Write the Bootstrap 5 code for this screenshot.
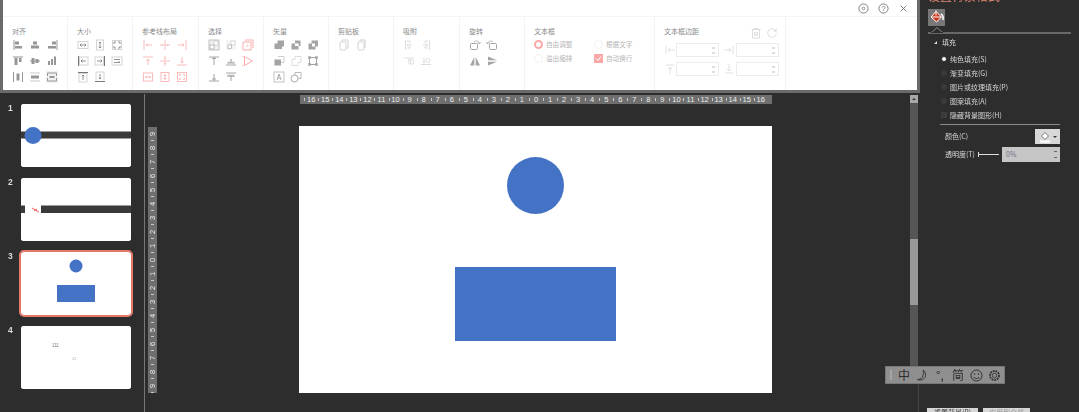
<!DOCTYPE html>
<html lang="zh-CN">
<head>
<meta charset="utf-8">
<title>PPT</title>
<link href="https://cdn.jsdelivr.net/npm/bootstrap@5.3.0/dist/css/bootstrap.min.css" rel="stylesheet">
<style>
html,body{margin:0;height:412px;overflow:hidden;background:#2d2d2d;}
body{font-family:"Noto Sans CJK SC","Liberation Sans",sans-serif;font-size:7px;line-height:1;}
.shell{width:1079px;height:412px;position:relative;filter:blur(.3px);}
.left-col{width:920px;flex:none;}
.ribbon{height:93px;background:#fff;border:solid #6a6a6a;border-width:0 3px 3px 3px;}
.ribbon-top{height:17px;border-bottom:1px solid #f4f4f4;padding-right:8px;gap:9px;color:#777;}
.ribbon-top svg{width:11px;height:11px;}
.rgroup{height:73px;border-right:1px solid #f3f3f3;flex:none;padding:10px 0 0 9px;}
.rtitle{color:#8a8a8a;font-size:7px;height:10px;line-height:8px;white-space:nowrap;}
.igrid{display:grid;grid-template-columns:repeat(3,17.4px);grid-auto-rows:16px;margin-top:0;margin-left:-.5px;}
.igrid svg{width:12px;height:12px;margin:2px 0 0 0;}
.tone-g{color:#a4a4a4;}
.tone-p{color:#f9abab;}
.tone-d{color:#969696;}
.tone-l{color:#d4d4d4;}
.opt-grid{display:grid;grid-template-columns:60px 50px;grid-auto-rows:14px;margin-top:0;color:#b5b5b5;font-size:6.6px;}
.opt{display:flex;align-items:center;gap:3px;white-space:nowrap;}
.dot{width:9px;height:9px;border-radius:50%;border:1px solid #f1f1f1;flex:none;}
.dot-on{border:2.5px solid #f9a7a7;background:#fff;}
.tick{width:9px;height:9px;background:#f9a7a7;flex:none;display:flex;}
.tick svg{width:9px;height:9px;}
.field-row{display:flex;align-items:center;height:19px;gap:0;}
.field-icon{width:12px;height:12px;color:#d8d8d8;flex:none;margin-right:0;}
.field{width:43px;height:14px;border:1px solid #ececec;flex:none;position:relative;margin:0 4px 0 0;}
.field::after{content:"";position:absolute;right:3px;top:3px;width:3px;height:7px;border-top:2px solid #ddd;border-bottom:2px solid #ddd;}
.work{height:319px;}
.thumbs{width:144px;flex:none;padding:11px 0 0 8px;border-right:0;}
.thumb-row{display:flex;height:74px;gap:8px;}
.tnum{color:#dcdcdc;font-family:"Liberation Sans",sans-serif;font-weight:700;font-size:8.5px;width:5px;margin-top:-1px;line-height:10px;}
.tcard{width:110px;height:63px;background:#fff;border-radius:3px;overflow:hidden;display:block;flex:none;}
.tsel{outline:2px solid #e4796a;outline-offset:0;border-radius:3px;}
.vline{width:1px;background:#777;flex:none;margin-top:1px;}
.canvas{flex:1 1 auto;min-width:0;}
.ruler-h{height:9px;margin:2px 0 0 155px;width:472px;background:#6f6f6f;color:#eee;display:flex;justify-content:center;font-family:"Liberation Sans",sans-serif;}
.rcell{width:14.06px;flex:none;text-align:center;font-size:7.5px;line-height:9px;background:linear-gradient(#c8c8c8,#c8c8c8) 0 3px/1px 3px no-repeat;}
.stage{margin-top:22px;}
.ruler-v{width:9px;height:266px;background:#6f6f6f;color:#eee;margin:1px 0 0 3px;display:flex;flex-direction:column;flex:none;font-family:"Liberation Sans",sans-serif;}
.vcell{height:14px;font-size:7.5px;line-height:9px;text-align:center;writing-mode:vertical-rl;transform:rotate(180deg);flex:none;background:linear-gradient(#c8c8c8,#c8c8c8) 3px 0/3px 1px no-repeat;}
.slide{width:473px;height:267px;background:#fff;margin-left:142px;position:relative;flex:none;}
.s-circle{position:absolute;left:208px;top:31px;width:57px;height:57px;border-radius:50%;background:#4472c4;}
.s-rect{position:absolute;left:156px;top:141px;width:161px;height:74px;background:#4472c4;}
.vscroll{width:8px;margin:2px 2px 0 0;flex:none;}
.vbtn{height:8px;background:#a8a8a8;position:relative;}
.vbtn::after{content:"";position:absolute;left:2px;top:3px;border:2px solid transparent;border-top:0;border-bottom:2px solid #333;}
.vtrack{height:263px;background:#555;padding-top:136px;}
.vthumb{height:66px;background:#999;}
.vrest{width:1px;background:#454545;height:46px;margin-left:8px;}
.pane{width:159px;flex:none;color:#ddd;}
.pane-title{color:#e98a76;font-size:12px;line-height:12px;margin:-10px 0 0 8px;height:12px;white-space:nowrap;}
.fill-btn{width:17px;height:17px;background:#777;margin:7px 0 0 8px;}
.fill-btn svg{width:17px;height:17px;display:block;}
.pane-line{height:2px;background:#686868;margin:6px 8px 0 8px;position:relative;}
.pane-line svg{position:absolute;left:3px;top:-5px;width:12px;height:6px;}
.sec{display:flex;align-items:center;height:10px;margin:3px 0 0 14px;gap:5px;}
.tri{width:0;height:0;border-left:3px solid transparent;border-bottom:3px solid #ddd;}
.fill-list{margin:5px 0 0 21px;}
.fill-row{display:flex;align-items:center;height:14px;gap:3px;white-space:nowrap;color:#d6d6d6;}
.rdo{width:6px;height:6px;border-radius:50%;background:#3a3a3a;flex:none;}
.rdo-on{background:#fff;box-sizing:border-box;border:1px solid #2d2d2d;}
.chk{width:6px;height:6px;background:#3c3c3c;flex:none;}
.pane-sep{height:1px;background:#8a8a8a;margin:2px 19px 0 20px;}
.prop{display:flex;align-items:center;justify-content:space-between;margin:0 19px 0 25px;white-space:nowrap;color:#d6d6d6;}
.colbtn{width:25px;height:15px;background:#d8d8d8;display:flex;align-items:center;justify-content:center;gap:2px;}
.colbtn svg{width:12px;height:12px;}
.colbtn i{border:2px solid transparent;border-top:2.5px solid #333;border-bottom:0;}
.slider{width:21px;height:5px;border-left:1px solid #ddd;position:relative;}
.slider::after{content:"";position:absolute;left:0;right:0;top:2px;height:1px;background:#ddd;}
.pct{width:58px;height:15px;background:#c6c6c6;color:#77708a;padding-left:4px;line-height:15px;position:relative;}
.pct::after{content:"";position:absolute;right:3px;top:4px;width:3px;height:7px;border-top:1px solid #666;border-bottom:1px solid #666;}
.ime{position:absolute;left:885px;top:366px;width:120px;height:18px;background:#8f8f8f;border:1px solid #777;display:flex;align-items:center;color:#2e2e2e;padding-left:4px;gap:0;}
.ime-grip{width:2px;height:10px;background:#a5a5a5;margin-right:3px;flex:none;}
.ime-t{font-size:12px;width:18px;text-align:center;flex:none;}
.ime-ic{width:18px;flex:none;display:flex;justify-content:center;}
.ime svg{width:13px;height:13px;display:block;}
.foot-btn{position:absolute;top:408px;height:6px;background:#d6d6d6;color:#444;font-size:7px;line-height:8px;text-align:center;overflow:hidden;}
.fb1{left:927px;width:51px;}
.fb2{left:983px;width:47px;color:#999;}
</style>
</head>
<body>
<svg width="0" height="0" class="d-none">
<defs>
<g id="h-arrow"><path d="M3 6h6M3 6l1.500-1.500M3 6l1.500 1.500M9 6L7.500 4.500M9 6L7.500 7.500"/></g>
<symbol id="al1" viewBox="0 0 12 12"><path d="M2 1v10" fill="none" stroke="currentColor"/><path d="M3 2.500h4v3H3zM3 7h7v2.500H3z" fill="currentColor"/></symbol>
<symbol id="al2" viewBox="0 0 12 12"><path d="M4 2.500h4v3H4zM2 6.500h8v3H2z" fill="currentColor"/></symbol>
<symbol id="al3" viewBox="0 0 12 12"><path d="M11 1v10" fill="none" stroke="currentColor"/><path d="M6 2.500h4v3H6zM2 7h8v2.500H2z" fill="currentColor"/></symbol>
<symbol id="al4" viewBox="0 0 12 12"><path d="M1 2h10" fill="none" stroke="currentColor"/><path d="M2.500 3h3v7h-3zM7 3h2.500v4H7z" fill="currentColor"/></symbol>
<symbol id="al5" viewBox="0 0 12 12"><path d="M2.500 3h3v6h-3zM6.500 4h3v4h-3z" fill="currentColor"/><path d="M1 6h10" stroke="currentColor"/></symbol>
<symbol id="al6" viewBox="0 0 12 12"><path d="M2 6h2v4H2zM5 4h2v6H5zM8 1.500h2V10H8z" fill="currentColor"/></symbol>
<symbol id="al7" viewBox="0 0 12 12"><path d="M1.500 1v10M10.500 1v10" fill="none" stroke="currentColor"/><path d="M4.500 2.500h3v7h-3z" fill="currentColor"/></symbol>
<symbol id="al8" viewBox="0 0 12 12"><path d="M1 2h10M1 10h10" fill="none" stroke="currentColor" opacity=".5"/><path d="M2 4.500h8v3H2z" fill="currentColor"/></symbol>
<symbol id="al9" viewBox="0 0 12 12"><rect width="12" height="12" fill="#f1f1f1"/><path d="M1.500 2h9v3M1.500 2v3M1.500 10h9V7M1.500 10V7" fill="none" stroke="currentColor"/><path d="M3.500 5h5v2h-5z" fill="currentColor"/></symbol>
<symbol id="bx1" viewBox="0 0 12 12"><rect x="1" y="2.500" width="10" height="7" fill="none" stroke="currentColor"/><use href="#h-arrow" fill="none" stroke="#777" stroke-width=".8"/></symbol>
<symbol id="bx2" viewBox="0 0 12 12"><rect x="2.500" y="1" width="7" height="10" fill="none" stroke="currentColor"/><path d="M6 3v6M4.800 4.200 6 3l1.200 1.200M4.800 7.800 6 9l1.200-1.200" fill="none" stroke="#777" stroke-width=".8"/></symbol>
<symbol id="bx3" viewBox="0 0 12 12"><rect x="1.500" y="1.500" width="9" height="9" fill="none" stroke="currentColor"/><path d="M3 5V3h2M9 5V3H7M3 7v2h2M9 7v2H7" fill="none" stroke="#777" stroke-width=".8"/></symbol>
<symbol id="bx4" viewBox="0 0 12 12"><path d="M1.500 1v10" stroke="#777" fill="none"/><rect x="2.500" y="2" width="8.500" height="8" fill="none" stroke="currentColor"/><path d="M4 6h5M4 6l1.500-1.500M4 6l1.500 1.500" fill="none" stroke="#777" stroke-width=".8"/></symbol>
<symbol id="bx5" viewBox="0 0 12 12"><path d="M10.500 1v10" stroke="#777" fill="none"/><rect x="1" y="2" width="8.500" height="8" fill="none" stroke="currentColor"/><path d="M3 6h5M8 6L6.500 4.500M8 6 6.500 7.500" fill="none" stroke="#777" stroke-width=".8"/></symbol>
<symbol id="bx6" viewBox="0 0 12 12"><rect x="1" y="2" width="10" height="8" fill="none" stroke="currentColor"/><path d="M3 4.500h6M3 7.500h6M7.500 6.500l1.500 1" fill="none" stroke="#777" stroke-width=".8"/></symbol>
<symbol id="bx7" viewBox="0 0 12 12"><path d="M1 1.500h10" stroke="#777" fill="none"/><rect x="2" y="2.500" width="8" height="8.500" fill="none" stroke="currentColor"/><path d="M6 9V4M6 4 4.800 5.200M6 4l1.200 1.200" fill="none" stroke="#777" stroke-width=".8"/></symbol>
<symbol id="bx8" viewBox="0 0 12 12"><path d="M1 10.500h10" stroke="#777" fill="none"/><path d="M2 9.500V1h8v8.500" fill="none" stroke="currentColor"/><path d="M6 3v5M6 8 4.800 6.800M6 8l1.200-1.200" fill="none" stroke="#777" stroke-width=".8"/></symbol>
<symbol id="gd1" viewBox="0 0 12 12"><path d="M2 1v10M4 6h6M4 6l1.500-1.500M4 6l1.500 1.500" fill="none" stroke="currentColor" stroke-width=".8"/></symbol>
<symbol id="gd2" viewBox="0 0 12 12"><path d="M6 1v10M1 6h3.500M3.500 5l1 1-1 1M11 6H7.500M8.500 5l-1 1 1 1" fill="none" stroke="currentColor" stroke-width=".8"/></symbol>
<symbol id="gd3" viewBox="0 0 12 12"><path d="M10 1v10M2 6h6M8 6 6.500 4.500M8 6 6.500 7.500" fill="none" stroke="currentColor" stroke-width=".8"/></symbol>
<symbol id="gd4" viewBox="0 0 12 12"><path d="M1 2h10M6 4v6M6 4 4.500 5.500M6 4l1.500 1.500" fill="none" stroke="currentColor" stroke-width=".8"/></symbol>
<symbol id="gd5" viewBox="0 0 12 12"><path d="M1 6h10M6 1v3.500M5 3.500l1 1 1-1M6 11V7.500M5 8.500l1-1 1 1" fill="none" stroke="currentColor" stroke-width=".8"/></symbol>
<symbol id="gd6" viewBox="0 0 12 12"><path d="M1 10h10M6 2v6M6 8 4.500 6.500M6 8l1.500-1.500" fill="none" stroke="currentColor" stroke-width=".8"/></symbol>
<symbol id="gd7" viewBox="0 0 12 12"><rect x="1.500" y="2" width="9" height="8" fill="none" stroke="currentColor" stroke-width=".8"/><path d="M3.500 6h5M3.500 6l1.500-1.300M3.500 6 5 7.300M8.500 6 7 4.700M8.500 6 7 7.300" fill="none" stroke="currentColor" stroke-width=".8"/></symbol>
<symbol id="gd8" viewBox="0 0 12 12"><rect x="2" y="1.500" width="8" height="9" fill="none" stroke="currentColor" stroke-width=".8"/><path d="M6 3.500v5M6 3.500 4.700 5M6 3.500 7.300 5M6 8.500 4.700 7M6 8.500 7.300 7" fill="none" stroke="currentColor" stroke-width=".8"/></symbol>
<symbol id="gd9" viewBox="0 0 12 12"><rect x="1.500" y="1.500" width="9" height="9" fill="none" stroke="currentColor" stroke-width=".8"/><path d="M3.500 5V3.500H5M8.500 5V3.500H7M3.500 7v1.500H5M8.500 7v1.500H7" fill="none" stroke="currentColor" stroke-width=".8"/></symbol>
<symbol id="sl1" viewBox="0 0 12 12"><rect x="1" y="1" width="10" height="10" fill="#f0f0f0" stroke="#c4c4c4"/><rect x="6" y="2" width="4" height="4" fill="#fff" stroke="#c4c4c4" stroke-width=".7"/><rect x="2" y="6" width="4" height="4" fill="#fff" stroke="#aaa" stroke-width=".7"/></symbol>
<symbol id="sl2" viewBox="0 0 12 12"><rect x="1" y="1" width="10" height="10" fill="#f4f4f4"/><rect x="6" y="2" width="4" height="4" fill="#fff" stroke="#ccc" stroke-width=".7"/><rect x="3" y="6" width="3.500" height="3.500" fill="#fff" stroke="#aaa" stroke-width=".7"/></symbol>
<symbol id="sl3" viewBox="0 0 12 12"><path d="M3 1h8v8M1 3h8v8H1z" fill="none" stroke="currentColor"/><path d="M4 8l2-2M5 6h1v1" fill="none" stroke="currentColor" stroke-width=".7"/></symbol>
<symbol id="sl4" viewBox="0 0 12 12"><path d="M1 2h10M6 2v8M4 3.500h4" fill="none" stroke="currentColor"/></symbol>
<symbol id="sl5" viewBox="0 0 12 12"><path d="M1 10h10M2 8h8" fill="none" stroke="currentColor"/><path d="M3.500 6.500h5V8h-5zM5 4h2v2.500H5z" fill="currentColor" opacity=".6"/></symbol>
<symbol id="sl6" viewBox="0 0 12 12"><path d="M2.500 1.500v9l8-4.500zM1 1v1M1 10v1" fill="none" stroke="currentColor"/></symbol>
<symbol id="sl7" viewBox="0 0 12 12"><path d="M1 10h10M6 3v7M4 8h4" fill="none" stroke="currentColor"/></symbol>
<symbol id="sl8" viewBox="0 0 12 12"><path d="M1 2h10M2 5h8M6 5v5" fill="none" stroke="currentColor"/><path d="M3 3.500h6V6H3z" fill="currentColor" opacity=".5"/></symbol>
<symbol id="ve1" viewBox="0 0 12 12"><path d="M4.500 1.500h6.500v6h-2V10H1.500V4.500h3z" fill="currentColor"/></symbol>
<symbol id="ve2" viewBox="0 0 12 12"><path d="M1.500 4.500h7v6h-7z" fill="currentColor"/><path d="M5 1.500h5.500v5.500H8.500V4.500H5z" fill="currentColor"/><rect x="5" y="4.500" width="3.500" height="2.500" fill="#fff"/></symbol>
<symbol id="ve3" viewBox="0 0 12 12"><path d="M4.500 1.500H11v6H8.500v3h-7v-6h3z" fill="currentColor"/><rect x="5" y="4.500" width="3" height="3" fill="#fff"/></symbol>
<symbol id="ve4" viewBox="0 0 12 12"><rect x="1.500" y="4.500" width="6.500" height="6" fill="currentColor"/><path d="M8 1.500h3v6H8M5 1.500h3" fill="none" stroke="#ccc"/></symbol>
<symbol id="ve5" viewBox="0 0 12 12"><path d="M5 1.500h6v6H8V10.500H2V4.500h3z" fill="none" stroke="#ddd"/></symbol>
<symbol id="ve6" viewBox="0 0 12 12"><path d="M2.500 2.500h7v7h-7z" fill="none" stroke="currentColor"/><path d="M1 1h3v3H1zM8 1h3v3H8zM1 8h3v3H1zM8 8h3v3H8z" fill="currentColor" opacity=".7"/></symbol>
<symbol id="ve7" viewBox="0 0 12 12"><rect x="1" y="1" width="10" height="10" fill="none" stroke="#c4c4c4"/><path d="M4 9l2-6 2 6M4.800 7h2.400" fill="none" stroke="#999" stroke-width=".8"/></symbol>
<symbol id="ve8" viewBox="0 0 12 12"><path d="M5 4V1.500h6v6H8" fill="none" stroke="#bbb"/><circle cx="4.500" cy="7.500" r="3.500" fill="none" stroke="#aaa"/></symbol>
<symbol id="cp1" viewBox="0 0 12 12"><path d="M4 2.500V1h6v8H8.500" fill="none" stroke="currentColor"/><rect x="2" y="3" width="6" height="8" rx="1" fill="none" stroke="currentColor"/></symbol>
<symbol id="cp2" viewBox="0 0 12 12"><path d="M5 2V1h5v8" fill="none" stroke="#ccc"/><rect x="3" y="3" width="6" height="8" rx="1" fill="none" stroke="currentColor"/></symbol>
<symbol id="sn1" viewBox="0 0 12 12"><path d="M2.500 1v10M4 2h3v2M4 9h3V7M9 6H4l1.500-1.500M4 6l1.500 1.500" fill="none" stroke="currentColor" stroke-width=".8"/></symbol>
<symbol id="sn2" viewBox="0 0 12 12"><path d="M9.500 1v10M8 2H5v2M8 9H5V7M3 6h5L6.500 4.500M8 6 6.500 7.500" fill="none" stroke="currentColor" stroke-width=".8"/></symbol>
<symbol id="sn3" viewBox="0 0 12 12"><path d="M1 3h10M6 4.500v5M6 4.500 4.800 5.700M6 4.500l1.200 1.200" fill="none" stroke="currentColor" stroke-width=".8"/><rect x="7.500" y="5" width="3" height="4" fill="none" stroke="currentColor" stroke-width=".7"/></symbol>
<symbol id="sn4" viewBox="0 0 12 12"><path d="M1 9.500h10M4 3v5M4 8 2.800 6.800M4 8l1.200-1.200" fill="none" stroke="currentColor" stroke-width=".8"/><circle cx="8" cy="5.500" r="2" fill="none" stroke="currentColor" stroke-width=".7"/></symbol>
<symbol id="ro1" viewBox="0 0 12 12"><rect x="1.500" y="4.500" width="7" height="6" rx="1" fill="none" stroke="currentColor"/><path d="M5 3c2-2 5-1 5.500 2M9 3.500l1.500 1.500 1-2" fill="none" stroke="currentColor" stroke-width=".8"/></symbol>
<symbol id="ro2" viewBox="0 0 12 12"><rect x="3.500" y="4.500" width="7" height="6" rx="1" fill="none" stroke="currentColor"/><path d="M7 3C5 1 2 2 1.500 5M3 3.500 1.500 5l-1-2" fill="none" stroke="currentColor" stroke-width=".8"/></symbol>
<symbol id="ro3" viewBox="0 0 12 12"><path d="M5.300 2 1 10.500h4.300zM6.700 2 11 10.500H6.700z" fill="currentColor"/></symbol>
<symbol id="ro4" viewBox="0 0 12 12"><path d="M2 1.500 11 5.300H2zM2 6.700h9l-9 3.800z" fill="currentColor"/></symbol>
<symbol id="mg1" viewBox="0 0 12 12"><path d="M2 2v8M4 6h7M4 6l2-2M4 6l2 2" fill="none" stroke="currentColor" stroke-width=".8"/></symbol>
<symbol id="mg2" viewBox="0 0 12 12"><path d="M10 2v8M1 6h7M8 6 6 4M8 6 6 8" fill="none" stroke="currentColor" stroke-width=".8"/></symbol>
<symbol id="mg3" viewBox="0 0 12 12"><path d="M2 2h8M6 4v7M6 4 4 6M6 4l2 2" fill="none" stroke="currentColor" stroke-width=".8"/></symbol>
<symbol id="mg4" viewBox="0 0 12 12"><path d="M2 10h8M6 1v7M6 8 4 6M6 8l2-2" fill="none" stroke="currentColor" stroke-width=".8"/></symbol>
</defs>
</svg>

<div class="shell d-flex">
  <div class="left-col">
    <div class="ribbon">
      <div class="ribbon-top d-flex justify-content-end align-items-center">
        <svg viewBox="0 0 12 12"><circle cx="6" cy="6" r="5" fill="none" stroke="currentColor"/><circle cx="6" cy="6" r="1.500" fill="none" stroke="currentColor" stroke-width=".8"/></svg>
        <svg viewBox="0 0 12 12"><circle cx="6" cy="6" r="5" fill="none" stroke="currentColor"/><text x="6" y="8.800" font-size="8" text-anchor="middle" fill="currentColor" font-family="Liberation Sans">?</text></svg>
        <svg viewBox="0 0 12 12"><path d="M3 3l6 6M9 3l-6 6" fill="none" stroke="currentColor"/></svg>
      </div>
      <div class="d-flex">
        <div class="rgroup" style="width:65px"><div class="rtitle">对齐</div><div class="igrid tone-d">
          <svg><use href="#al1"/></svg><svg><use href="#al2"/></svg><svg><use href="#al3"/></svg>
          <svg><use href="#al4"/></svg><svg><use href="#al5"/></svg><svg><use href="#al6"/></svg>
          <svg><use href="#al7"/></svg><svg><use href="#al8"/></svg><svg><use href="#al9"/></svg>
        </div></div>
        <div class="rgroup" style="width:65px"><div class="rtitle">大小</div><div class="igrid tone-l">
          <svg><use href="#bx1"/></svg><svg><use href="#bx2"/></svg><svg><use href="#bx3"/></svg>
          <svg><use href="#bx4"/></svg><svg><use href="#bx5"/></svg><svg><use href="#bx6"/></svg>
          <svg><use href="#bx7"/></svg><svg><use href="#bx8"/></svg>
        </div></div>
        <div class="rgroup" style="width:66px"><div class="rtitle">参考线布局</div><div class="igrid tone-p">
          <svg><use href="#gd1"/></svg><svg><use href="#gd2"/></svg><svg><use href="#gd3"/></svg>
          <svg><use href="#gd4"/></svg><svg><use href="#gd5"/></svg><svg><use href="#gd6"/></svg>
          <svg><use href="#gd7"/></svg><svg><use href="#gd8"/></svg><svg><use href="#gd9"/></svg>
        </div></div>
        <div class="rgroup" style="width:65px"><div class="rtitle">选择</div><div class="igrid tone-g">
          <svg><use href="#sl1"/></svg><svg><use href="#sl2"/></svg><svg class="tone-p"><use href="#sl3"/></svg>
          <svg><use href="#sl4"/></svg><svg><use href="#sl5"/></svg><svg class="tone-p"><use href="#sl6"/></svg>
          <svg><use href="#sl7"/></svg><svg><use href="#sl8"/></svg>
        </div></div>
        <div class="rgroup" style="width:65px"><div class="rtitle">矢量</div><div class="igrid tone-g">
          <svg><use href="#ve1"/></svg><svg><use href="#ve2"/></svg><svg><use href="#ve3"/></svg>
          <svg><use href="#ve4"/></svg><svg><use href="#ve5"/></svg><svg><use href="#ve6"/></svg>
          <svg><use href="#ve7"/></svg><svg><use href="#ve8"/></svg>
        </div></div>
        <div class="rgroup" style="width:65px"><div class="rtitle">剪贴板</div><div class="igrid tone-l">
          <svg><use href="#cp1"/></svg><svg><use href="#cp2"/></svg>
        </div></div>
        <div class="rgroup" style="width:66px"><div class="rtitle">吸附</div><div class="igrid tone-l">
          <svg><use href="#sn1"/></svg><svg><use href="#sn2"/></svg><span></span>
          <svg><use href="#sn3"/></svg><svg><use href="#sn4"/></svg>
        </div></div>
        <div class="rgroup" style="width:65px"><div class="rtitle">旋转</div><div class="igrid tone-g">
          <svg><use href="#ro1"/></svg><svg><use href="#ro2"/></svg><span></span>
          <svg><use href="#ro3"/></svg><svg><use href="#ro4"/></svg>
        </div></div>
        <div class="rgroup" style="width:130px"><div class="rtitle">文本框</div><div class="opt-grid">
          <div class="opt"><span class="dot dot-on"></span>自由调整</div><div class="opt"><span class="dot"></span>根据文字</div>
          <div class="opt"><span class="dot"></span>溢出缩排</div><div class="opt"><span class="tick"><svg viewBox="0 0 9 9"><path d="M2 4.500l2 2 3-4" fill="none" stroke="#fff"/></svg></span>自动换行</div>
        </div></div>
        <div class="rgroup" style="width:131px">
          <div class="d-flex align-items-start" style="height:10px">
            <div class="rtitle flex-grow-1">文本框边距</div>
            <svg class="tone-l me-1" width="12" height="12" viewBox="0 0 12 12"><path d="M1.500 2.500h9M4.500 2.500v-1h3v1M2.500 2.500v8.500h7V2.500M4.500 5v4M6 5v4M7.500 5v4" fill="none" stroke="currentColor" stroke-width=".8"/></svg>
            <svg class="tone-l" width="12" height="12" viewBox="0 0 12 12" style="margin-right:7px"><path d="M9.800 4A4.300 4.300 0 1 0 10.300 6.500M10.200 1.800V4.200H7.800" fill="none" stroke="currentColor" stroke-width=".8"/></svg>
          </div>
          <div class="field-row" style="margin-top:3px"><svg class="field-icon"><use href="#mg1"/></svg><div class="field"></div><svg class="field-icon" style="margin-right:1px"><use href="#mg2"/></svg><div class="field"></div></div>
          <div class="field-row"><svg class="field-icon"><use href="#mg3"/></svg><div class="field"></div><svg class="field-icon" style="margin-right:1px"><use href="#mg4"/></svg><div class="field"></div></div>
        </div>
      </div>
    </div>

    <div class="work d-flex">
      <div class="thumbs">
        <div class="thumb-row"><div class="tnum">1</div>
          <svg class="tcard" viewBox="0 0 110 63"><rect width="110" height="63" fill="#fff"/><rect y="27.500" width="110" height="7" fill="#3a3a3a"/><circle cx="12" cy="31.500" r="8.500" fill="#4472c4"/></svg>
        </div>
        <div class="thumb-row"><div class="tnum">2</div>
          <svg class="tcard" viewBox="0 0 110 63"><rect width="110" height="63" fill="#fff"/><rect y="27.500" width="110" height="7.500" fill="#3a3a3a"/><rect x="4" y="26" width="16" height="11" fill="#fff"/><path d="M11 30l7 4M13 33l3-2" stroke="#ef5a5a" fill="none"/></svg>
        </div>
        <div class="thumb-row"><div class="tnum">3</div>
          <svg class="tcard tsel" viewBox="0 0 110 63"><rect width="110" height="63" fill="#fff"/><circle cx="55" cy="14" r="6.500" fill="#4472c4"/><rect x="36" y="33" width="38" height="17" fill="#4472c4"/></svg>
        </div>
        <div class="thumb-row"><div class="tnum">4</div>
          <svg class="tcard" viewBox="0 0 110 63"><rect width="110" height="63" fill="#fff"/><text x="31" y="21" font-size="4.500" fill="#777" font-family="Liberation Sans">111</text><text x="51" y="34" font-size="4" fill="#aaa" font-family="Liberation Sans">11</text></svg>
        </div>
      </div>
      <div class="vline"></div>
      <div class="canvas d-flex">
        <div class="flex-grow-1">
          <div class="ruler-h"><span class="rcell">16</span><span class="rcell">15</span><span class="rcell">14</span><span class="rcell">13</span><span class="rcell">12</span><span class="rcell">11</span><span class="rcell">10</span><span class="rcell">9</span><span class="rcell">8</span><span class="rcell">7</span><span class="rcell">6</span><span class="rcell">5</span><span class="rcell">4</span><span class="rcell">3</span><span class="rcell">2</span><span class="rcell">1</span><span class="rcell">0</span><span class="rcell">1</span><span class="rcell">2</span><span class="rcell">3</span><span class="rcell">4</span><span class="rcell">5</span><span class="rcell">6</span><span class="rcell">7</span><span class="rcell">8</span><span class="rcell">9</span><span class="rcell">10</span><span class="rcell">11</span><span class="rcell">12</span><span class="rcell">13</span><span class="rcell">14</span><span class="rcell">15</span><span class="rcell">16</span></div>
          <div class="stage d-flex">
            <div class="ruler-v"><span class="vcell">9</span><span class="vcell">8</span><span class="vcell">7</span><span class="vcell">6</span><span class="vcell">5</span><span class="vcell">4</span><span class="vcell">3</span><span class="vcell">2</span><span class="vcell">1</span><span class="vcell">0</span><span class="vcell">1</span><span class="vcell">2</span><span class="vcell">3</span><span class="vcell">4</span><span class="vcell">5</span><span class="vcell">6</span><span class="vcell">7</span><span class="vcell">8</span><span class="vcell">9</span></div>
            <div class="slide"><div class="s-circle"></div><div class="s-rect"></div></div>
          </div>
        </div>
        <div class="vscroll">
          <div class="vbtn"></div>
          <div class="vtrack"><div class="vthumb"></div></div>
          <div class="vrest"></div>
        </div>
      </div>
    </div>
  </div>

  <div class="pane">
    <div class="pane-title">设置背景格式</div>
    <div class="fill-btn"><svg viewBox="0 0 17 17"><path d="M8 2.500l5.500 5.500-5 5L3 8z" fill="#c8371c" stroke="#fff" stroke-width="1"/><path d="M8 1.500v5M4 8h9" stroke="#fff" stroke-width="1"/><path d="M13 5c2 1 2.500 3 2 6" fill="none" stroke="#fff" stroke-width="1.500"/></svg></div>
    <div class="pane-line"><svg viewBox="0 0 12 6"><path d="M0 6 6 .5 12 6z" fill="#2d2d2d" stroke="#8a8a8a"/><path d="M0 6h12" stroke="#2d2d2d" stroke-width="2"/></svg></div>
    <div class="sec"><span class="tri"></span><span>填充</span></div>
    <div class="fill-list">
      <div class="fill-row"><span class="rdo rdo-on"></span>纯色填充(S)</div>
      <div class="fill-row"><span class="rdo"></span>渐变填充(G)</div>
      <div class="fill-row"><span class="rdo"></span>图片或纹理填充(P)</div>
      <div class="fill-row"><span class="rdo"></span>图案填充(A)</div>
      <div class="fill-row"><span class="chk"></span>隐藏背景图形(H)</div>
    </div>
    <div class="pane-sep"></div>
    <div class="prop mt-1"><span>颜色(C)</span><span class="colbtn"><svg viewBox="0 0 12 12"><path d="M6 1.500 9.500 5 6 8.500 2.500 5z" fill="#fff" stroke="#555" stroke-width=".8"/><path d="M1 10.500h10" stroke="#fff" stroke-width="2"/></svg><i></i></span></div>
    <div class="prop" style="margin-top:3px"><span>透明度(T)</span><span class="slider"></span><span class="pct">0%</span></div>
  </div>

  <div class="ime">
    <span class="ime-grip"></span>
    <span class="ime-t">中</span>
    <span class="ime-ic"><svg viewBox="0 0 13 13"><path d="M7 1c3 2 3.500 6 1 8.500-1.800 1.800-4.500 2-6.500 1 3 0 5-1.500 5.500-4C7.500 4.500 7.500 2.500 7 1z" fill="none" stroke="#2e2e2e" stroke-width=".9"/></svg></span>
    <span class="ime-t">°,</span>
    <span class="ime-t">简</span>
    <span class="ime-ic"><svg viewBox="0 0 13 13"><circle cx="6.500" cy="6.500" r="5.500" fill="none" stroke="#2e2e2e"/><circle cx="4.500" cy="5" r=".8" fill="#2e2e2e"/><circle cx="8.500" cy="5" r=".8" fill="#2e2e2e"/><path d="M3.500 8c1.500 2 4.500 2 6 0" fill="none" stroke="#2e2e2e"/></svg></span>
    <span class="ime-ic"><svg viewBox="0 0 13 13"><circle cx="6.500" cy="6.500" r="4.500" fill="none" stroke="#2e2e2e" stroke-width="1.800" stroke-dasharray="1.800 .9"/><circle cx="6.500" cy="6.500" r="2.200" fill="none" stroke="#2e2e2e" stroke-width=".8"/></svg></span>
  </div>
  <div class="foot-btn fb1">重置背景(R)</div>
  <div class="foot-btn fb2">应用到全部</div>
</div>
<script src="https://cdn.jsdelivr.net/npm/bootstrap@5.3.0/dist/js/bootstrap.bundle.min.js"></script>
</body>
</html>
